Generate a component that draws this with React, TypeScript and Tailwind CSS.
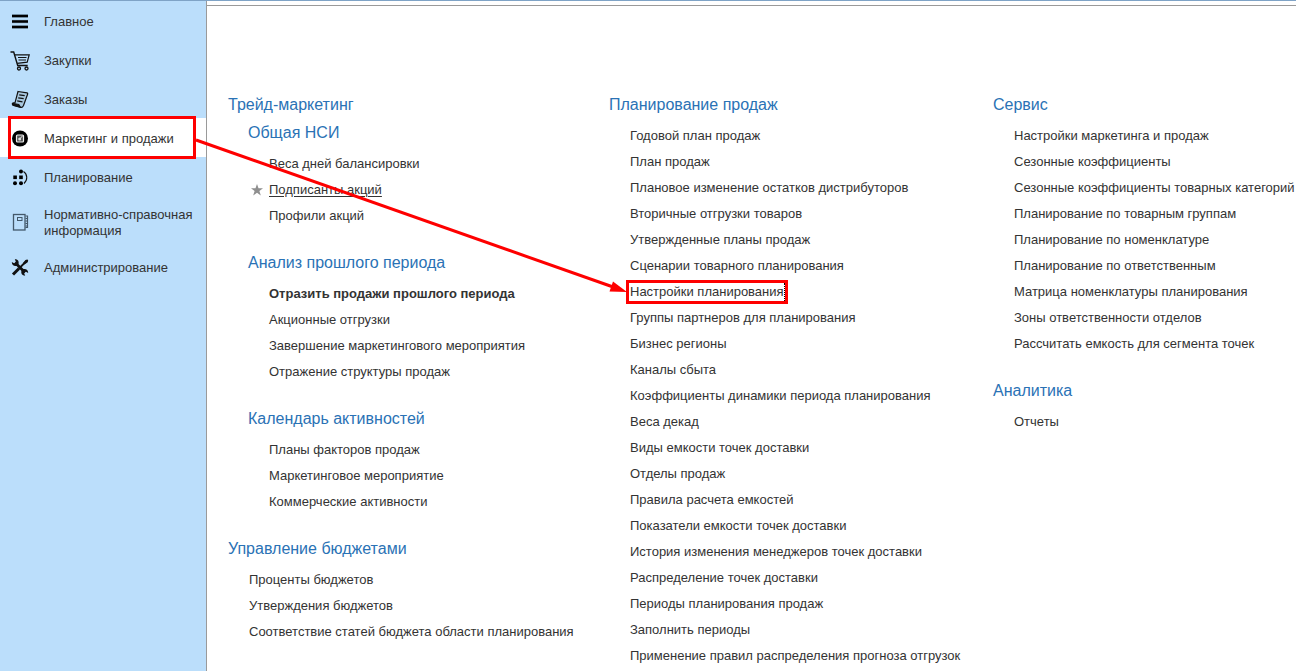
import type { ReactNode } from 'react';

type Item = { text: string; bold?: boolean; starred?: boolean; marked?: boolean };
type Group = { title: string; items: Item[] };

const list = (...texts: string[]): Item[] => texts.map((text) => ({ text }));

const tradeGroups: Group[] = [
  {
    title: 'Общая НСИ',
    items: [
      { text: 'Веса дней балансировки' },
      { text: 'Подписанты акций', starred: true },
      { text: 'Профили акций' },
    ],
  },
  {
    title: 'Анализ прошлого периода',
    items: [
      { text: 'Отразить продажи прошлого периода', bold: true },
      ...list('Акционные отгрузки', 'Завершение маркетингового мероприятия', 'Отражение структуры продаж'),
    ],
  },
  {
    title: 'Календарь активностей',
    items: list('Планы факторов продаж', 'Маркетинговое мероприятие', 'Коммерческие активности'),
  },
];

const budget: Group = {
  title: 'Управление бюджетами',
  items: list('Проценты бюджетов', 'Утверждения бюджетов', 'Соответствие статей бюджета области планирования'),
};

const planning: Group = {
  title: 'Планирование продаж',
  items: [
    ...list(
      'Годовой план продаж',
      'План продаж',
      'Плановое изменение остатков дистрибуторов',
      'Вторичные отгрузки товаров',
      'Утвержденные планы продаж',
      'Сценарии товарного планирования',
    ),
    { text: 'Настройки планирования', marked: true },
    ...list(
      'Группы партнеров для планирования',
      'Бизнес регионы',
      'Каналы сбыта',
      'Коэффициенты динамики периода планирования',
      'Веса декад',
      'Виды емкости точек доставки',
      'Отделы продаж',
      'Правила расчета емкостей',
      'Показатели емкости точек доставки',
      'История изменения менеджеров точек доставки',
      'Распределение точек доставки',
      'Периоды планирования продаж',
      'Заполнить периоды',
      'Применение правил распределения прогноза отгрузок',
    ),
  ],
};

const service: Group = {
  title: 'Сервис',
  items: list(
    'Настройки маркетинга и продаж',
    'Сезонные коэффициенты',
    'Сезонные коэффициенты товарных категорий',
    'Планирование по товарным группам',
    'Планирование по номенклатуре',
    'Планирование по ответственным',
    'Матрица номенклатуры планирования',
    'Зоны ответственности отделов',
    'Рассчитать емкость для сегмента точек',
  ),
};

const analytics: Group = { title: 'Аналитика', items: list('Отчеты') };

function Icon({ children }: { children: ReactNode }) {
  return (
    <svg viewBox="0 0 20 20" className="size-5 shrink-0" fill="none" stroke="#111" aria-hidden="true">
      {children}
    </svg>
  );
}

const MenuIcon = () => (
  <Icon>
    <path d="M2 4h16M2 9.500h16M2 15h16" stroke="#8fb3cc" strokeWidth="3.600" />
    <path d="M2 4h16M2 9.500h16M2 15h16" stroke="#000" strokeWidth="2.400" />
  </Icon>
);

const CartIcon = () => (
  <Icon>
    <path d="M.5 1h3.2l4 13.5h10" strokeWidth="1.4" />
    <path d="M5 3.800h14.200l-2 7.400-10 1.200" strokeWidth="1.200" />
    <path d="M8 6.500h8.500M8.500 9h7.500" strokeWidth="1.100" />
    <circle cx="9" cy="17.500" r="1.500" strokeWidth="1.300" />
    <circle cx="16.500" cy="17.500" r="1.500" strokeWidth="1.300" />
  </Icon>
);

const OrdersIcon = () => (
  <Icon>
    <path d="M8 1.500 17 2.800c.9.400.8 1.200.4 2l-3.900 10.700c-.6 1.400-1.600 2.200-2.800 1.900L2.800 15.100c-.8-.8-.4-2 .6-2.200L5 12.800z" fill="#a9c8df" strokeWidth="1.200" />
    <path d="m2.300 13.300 6.800 1.200 1.300 2.700-7.400-2z" fill="#111" />
    <path d="m9.200 4.800 5.500.9M8.200 7.800l5.500.9M7.200 10.800l5.300 1" strokeWidth="1.200" />
  </Icon>
);

const MarketingIcon = () => (
  <Icon>
    <circle cx="10" cy="9.500" r="8" fill="#000" stroke="none" />
    <rect x="6.500" y="6" width="7" height="7" rx="1" fill="#555" stroke="#eee" strokeWidth="1.200" />
    <circle cx="9.700" cy="10" r="1.500" fill="#ddd" stroke="none" />
    <path d="m10.500 9 2.200-2.200" stroke="#eee" />
  </Icon>
);

const PlanningIcon = () => (
  <Icon>
    <g fill="#000" stroke="none">
      <circle cx="11" cy="3.500" r="2" />
      <rect x="3.300" y="7.500" width="3.600" height="3.600" />
      <rect x="9.200" y="7.500" width="3.600" height="3.600" />
      <circle cx="5" cy="15.300" r="2" />
      <circle cx="11" cy="15.300" r="2" />
    </g>
    <path d="M13.500 3.500c4 2.500 4.500 8.500.5 12" strokeWidth="1.100" />
  </Icon>
);

const BookIcon = () => (
  <Icon>
    <rect x="3.500" y="1.500" width="11.500" height="15.500" stroke="#43586a" strokeWidth="1.300" />
    <rect x="7.500" y="4.500" width="4.500" height="3" stroke="#43586a" />
    <path d="M15.500 3h2v11.500h-2M15.500 5.500h2.500M15.500 8h2.500M15.500 10.500h2.500M15.500 13h2.500" stroke="#43586a" strokeWidth="1.200" />
  </Icon>
);

const ToolsIcon = () => (
  <Icon>
    <path d="m5 4.500 10 10" strokeWidth="2.800" />
    <path d="M1.800 4 4.500 5.500 6 4 4.800 1.300c3 0 4.500 2 3.700 4.900L6.700 7.900C4 8.500 1.800 7 1.800 4z" fill="#111" stroke="none" />
    <path d="m18.200 15-2.700-1.500-1.500 1.500 1.200 2.700c-3 0-4.500-2-3.700-4.900l1.800-1.700c2.700-.6 4.900.9 4.900 3.900z" fill="#111" stroke="none" />
    <path d="m17 2.500-8 8" strokeWidth="1.800" />
    <path d="m15.500 2 2-.5.700.7-.5 2-3.200 2.300-1.500-1.500z" fill="#111" stroke="none" />
    <path d="m9 10.500-6 6" strokeWidth="3" />
  </Icon>
);

const sections = [
  { text: 'Главное', icon: <MenuIcon /> },
  { text: 'Закупки', icon: <CartIcon /> },
  { text: 'Заказы', icon: <OrdersIcon /> },
  { text: 'Маркетинг и продажи', icon: <MarketingIcon />, active: true },
  { text: 'Планирование', icon: <PlanningIcon /> },
  { text: 'Нормативно-справочная информация', icon: <BookIcon />, tall: true },
  { text: 'Администрирование', icon: <ToolsIcon /> },
];

function Heading({ children }: { children: ReactNode }) {
  return (
    <h2 className="text-base leading-7 whitespace-nowrap text-[#2a72b5]">
      <a href="#">{children}</a>
    </h2>
  );
}

function Entry({ item }: { item: Item }) {
  return (
    <li className="relative flex h-[26px] items-center">
      {item.starred && (
        <svg viewBox="0 0 12 12" className="absolute -left-[18px] size-3" fill="#8f8f8f" aria-hidden="true">
          <path d="m6 0 1.500 4.200H12L8.400 6.900 9.800 11.500 6 8.700l-3.800 2.800 1.400-4.600L0 4.200h4.500z" />
        </svg>
      )}
      <a href="#" className={`relative ${item.bold ? 'font-bold' : ''} ${item.starred ? 'underline underline-offset-2' : ''}`}>
        {item.text}
        {item.marked && (
          <span className="absolute -inset-1 border-3 border-[#fe0000]">
            <span className="block h-full border-r border-dotted border-black" />
          </span>
        )}
      </a>
    </li>
  );
}

function Section({ group }: { group: Group }) {
  return (
    <section>
      <Heading>{group.title}</Heading>
      <ul className="mt-1 pl-[21px] whitespace-nowrap">
        {group.items.map((item) => (
          <Entry key={item.text} item={item} />
        ))}
      </ul>
    </section>
  );
}

export default function App() {
  return (
    <div className="relative flex min-h-screen overflow-hidden border-t border-[#7fa3c6] bg-white font-['Liberation_Sans',Arial,sans-serif] text-[13px] leading-4 text-[#333]">
      <nav className="w-[207px] shrink-0 border-r border-[#9a9a9a] bg-[#bbdefb]">
        {sections.map((s) => (
          <a
            key={s.text}
            href="#"
            className={`relative flex items-center gap-3.5 pt-0.5 pr-3 pl-2.5 ${s.tall ? 'h-[51px]' : 'h-[39px]'} ${s.active ? 'bg-white' : ''}`}
          >
            {s.icon}
            <span>{s.text}</span>
            {s.active && <span className="absolute -top-0.5 -bottom-0.5 right-2.5 left-2 border-3 border-[#fe0000]" />}
          </a>
        ))}
      </nav>
      <main className="mt-1 min-w-0 grow border-t border-[#9a9a9a] pt-[85px] pl-[21px]">
        <div className="grid grid-cols-[381fr_384fr_303fr]">
          <div className="flex min-w-0 flex-col gap-5">
            <section>
              <Heading>Трейд-маркетинг</Heading>
              <div className="flex flex-col gap-5 pl-5">
                {tradeGroups.map((g) => (
                  <Section key={g.title} group={g} />
                ))}
              </div>
            </section>
            <Section group={budget} />
          </div>
          <div className="min-w-0">
            <Section group={planning} />
          </div>
          <div className="flex min-w-0 flex-col gap-5">
            <Section group={service} />
            <Section group={analytics} />
          </div>
        </div>
      </main>
      <svg width="440" height="160" className="pointer-events-none absolute top-[135px] left-[190px]" aria-hidden="true">
        <path d="m6 4 420 148" stroke="#fe0000" strokeWidth="3" />
        <path d="m437 156-17.500-.5 3.500-10z" fill="#fe0000" />
      </svg>
    </div>
  );
}
